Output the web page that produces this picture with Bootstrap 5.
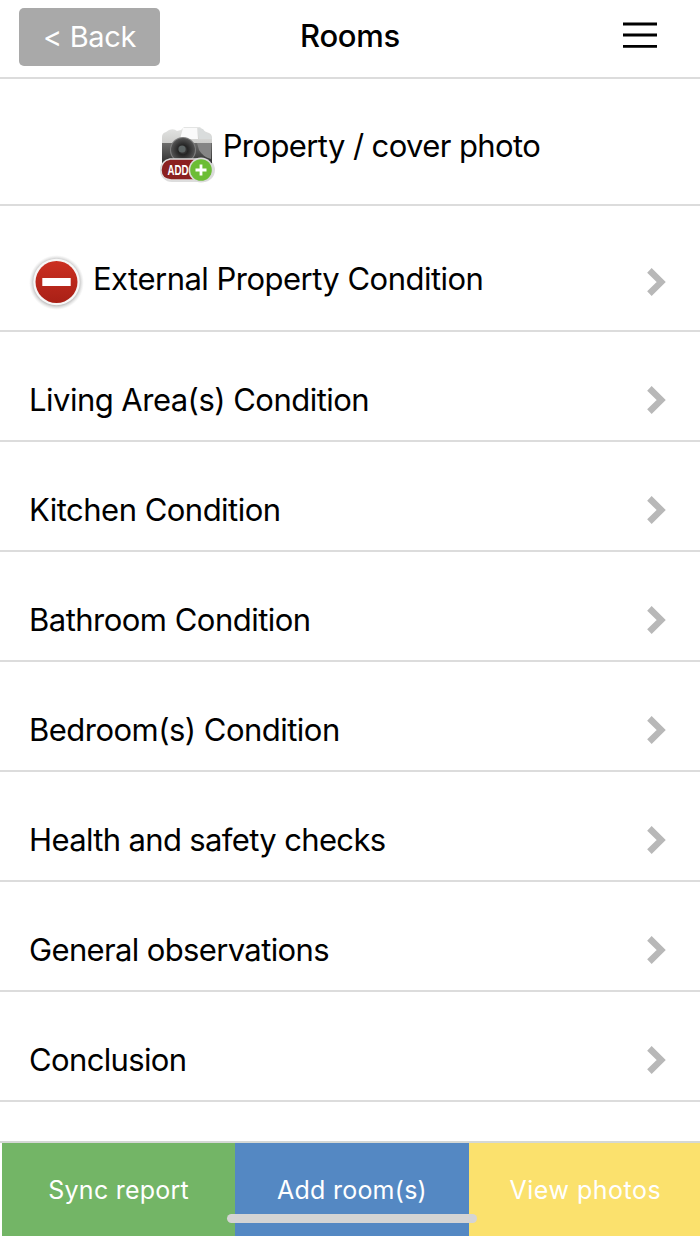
<!DOCTYPE html>
<html lang="en">
<head>
<meta charset="utf-8">
<meta name="viewport" content="width=device-width, initial-scale=1">
<title>Rooms</title>
<link href="https://cdn.jsdelivr.net/npm/bootstrap@5.3.0/dist/css/bootstrap.min.css" rel="stylesheet">
<style>
body{font-family:Inter,"Liberation Sans",sans-serif;font-size:31px;line-height:40px;color:#000;background:#fff;height:1244px;overflow:hidden}
.topbar{height:79px;border-bottom:2px solid #dcdcdc;padding:8px 43px 0 19px}
.btn-back{width:141px;height:58px;background:#a9a9a9;color:#fff;border:0;border-radius:5px;font-size:29px;line-height:40px;padding:0;letter-spacing:-.35px}
.btn-back:hover{background:#999;color:#fff}
.page-title{font-size:31px;line-height:40px;font-weight:500;margin:8px 0 0;letter-spacing:-.3px}
.menu-btn{width:117px;height:58px;padding:0}
.menu-btn svg{margin-top:13px}
.rooms .list-group-item{height:110px;padding:48px 34px 0 29px;border-color:#dcdcdc;border-width:0 0 2px;color:#000;white-space:nowrap;letter-spacing:-.52px}
.rooms .cover-item{height:127px;padding:47px 0 0;letter-spacing:-.6px}
.rooms .external-item{height:126px;padding-top:53px;padding-left:28px}
.rooms .tight{letter-spacing:-.64px}
.chev{margin-top:6px}
.chev path{fill:none;stroke:#b8b8b8;stroke-width:6.4}
.cover-item svg{margin:-1px 8px 0 -1px}
.external-item .stop{margin:-5px 8px 0 0}
.external-item .chev{margin-top:9px}
.actions{margin-top:39px;border-top:2px solid #d5d8d5;padding-left:2px;overflow:hidden}
.actions .row{width:700px}
.actions .btn{height:93px;border:0;border-radius:0;color:#fff;font-size:25px;line-height:40px;padding:1px 0 0;letter-spacing:.25px}
.act-sync{background:#73b566}.act-add{background:#5488c3}.act-view{background:#fbe16d}
.actions .act-view{letter-spacing:.5px}
.home-bar{left:227px;top:1214px;width:250px;height:9px;border-radius:5px;background:#d4d4d4}
</style>
</head>
<body>
<header class="topbar d-flex justify-content-between align-items-start">
  <button class="btn btn-back">&lt; Back</button>
  <h1 class="page-title">Rooms</h1>
  <button class="btn menu-btn border-0 d-flex justify-content-end" aria-label="Menu">
    <svg width="34" height="28" viewBox="0 0 34 28"><path d="M0 3h34M0 14h34M0 25.3h34" stroke="#000" stroke-width="2.8"/></svg>
  </button>
</header>
<main class="list-group list-group-flush rooms">
  <a class="list-group-item cover-item d-flex justify-content-center align-items-start" href="#">
    <svg width="56" height="60" viewBox="0 0 56 60">
      <defs>
        <linearGradient id="body" x1="0" y1="0" x2="0" y2="1"><stop offset="0" stop-color="#e4e5e4"/><stop offset=".4" stop-color="#cfcfcd"/><stop offset="1" stop-color="#aaa"/></linearGradient>
        <linearGradient id="grip" x1="0" y1="0" x2="0" y2="1"><stop offset="0" stop-color="#6d6d6c"/><stop offset="1" stop-color="#303030"/></linearGradient>
        <radialGradient id="lens"><stop offset="0" stop-color="#555"/><stop offset=".4" stop-color="#242424"/><stop offset=".7" stop-color="#3c3c3c"/><stop offset="1" stop-color="#555"/></radialGradient>
      </defs>
      <rect x="1" y="33" width="55" height="24" rx="12" fill="#ddd"/>
      <path d="M3 12q0-4 4-5l3-2q5-2 8 1l4-1 3-3h16l4 4 5 2q3 1 3 5v27H3z" fill="url(#body)"/>
      <path d="M24 3h14l1 11H21z" fill="#fafafa"/><path d="M39 3l5 1 3 4q5 1 6 6H40z" fill="#d9dcdc"/>
      <path d="M3 18h50v20H3z" fill="url(#grip)"/>
      <path d="M38 18h14v16q-8-2-12-9z" fill="#858585"/>
      <circle cx="24" cy="25" r="13" fill="#808080"/><circle cx="24" cy="25" r="12" fill="url(#lens)"/><circle cx="23" cy="24" r="3.6" fill="#5c6464"/>
      <path d="M11 34h33v21H12Q2 54 2 45t9-11z" fill="#8b2020" stroke="#dedede" stroke-width="1.4"/>
      <text x="8.5" y="50" fill="#fff" font-family="Liberation Sans,sans-serif" font-weight="700" font-size="14" letter-spacing="0" textLength="21" lengthAdjust="spacingAndGlyphs">ADD</text>
      <circle cx="42" cy="45" r="12.5" fill="#dadada"/><circle cx="42" cy="45" r="10.8" fill="#6cbd35"/>
      <path d="M36.5 45h11M42 39.5v11" stroke="#fff" stroke-width="2.8"/>
    </svg>
    <span>Property / cover photo</span>
  </a>
  <a class="list-group-item external-item d-flex align-items-start" href="#">
    <svg class="stop" width="57" height="57" viewBox="0 0 57 57">
      <defs><linearGradient id="red" x1="0" y1="0" x2="0" y2="1"><stop offset="0" stop-color="#cb3022"/><stop offset="1" stop-color="#a92016"/></linearGradient>
      <radialGradient id="halo"><stop offset=".82" stop-color="#bbb"/><stop offset="1" stop-color="#ddd" stop-opacity="0"/></radialGradient></defs>
      <circle cx="28.5" cy="28.5" r="27.5" fill="url(#halo)"/><circle cx="28.5" cy="28" r="23.3" fill="#f7f7f7"/><circle cx="28.5" cy="28" r="21" fill="url(#red)"/>
      <rect x="14.3" y="24" width="28.4" height="8" fill="#fff"/>
    </svg>
    <span>External Property Condition</span>
    <svg class="chev ms-auto" width="19" height="28" viewBox="0 0 19 28"><path d="M2.4 2.4 14.2 14 2.4 25.6"/></svg>
  </a>
  <a class="list-group-item d-flex align-items-start" href="#"><span>Living Area(s) Condition</span><svg class="chev ms-auto" width="19" height="28" viewBox="0 0 19 28"><path d="M2.4 2.4 14.2 14 2.4 25.6"/></svg></a>
  <a class="list-group-item d-flex align-items-start" href="#"><span>Kitchen Condition</span><svg class="chev ms-auto" width="19" height="28" viewBox="0 0 19 28"><path d="M2.4 2.4 14.2 14 2.4 25.6"/></svg></a>
  <a class="list-group-item d-flex align-items-start" href="#"><span>Bathroom Condition</span><svg class="chev ms-auto" width="19" height="28" viewBox="0 0 19 28"><path d="M2.4 2.4 14.2 14 2.4 25.6"/></svg></a>
  <a class="list-group-item d-flex align-items-start" href="#"><span>Bedroom(s) Condition</span><svg class="chev ms-auto" width="19" height="28" viewBox="0 0 19 28"><path d="M2.4 2.4 14.2 14 2.4 25.6"/></svg></a>
  <a class="list-group-item tight d-flex align-items-start" href="#"><span>Health and safety checks</span><svg class="chev ms-auto" width="19" height="28" viewBox="0 0 19 28"><path d="M2.4 2.4 14.2 14 2.4 25.6"/></svg></a>
  <a class="list-group-item tight d-flex align-items-start" href="#"><span>General observations</span><svg class="chev ms-auto" width="19" height="28" viewBox="0 0 19 28"><path d="M2.4 2.4 14.2 14 2.4 25.6"/></svg></a>
  <a class="list-group-item tight d-flex align-items-start border-bottom-2" href="#" style="border-bottom-width:2px"><span>Conclusion</span><svg class="chev ms-auto" width="19" height="28" viewBox="0 0 19 28"><path d="M2.4 2.4 14.2 14 2.4 25.6"/></svg></a>
</main>
<footer class="actions">
  <div class="row g-0">
    <div class="col-4"><button class="btn w-100 act-sync">Sync report</button></div>
    <div class="col-4"><button class="btn w-100 act-add">Add room(s)</button></div>
    <div class="col-4"><button class="btn w-100 act-view">View photos</button></div>
  </div>
</footer>
<div class="home-bar position-absolute"></div>
<script src="https://cdn.jsdelivr.net/npm/bootstrap@5.3.0/dist/js/bootstrap.bundle.min.js"></script>
</body>
</html>
